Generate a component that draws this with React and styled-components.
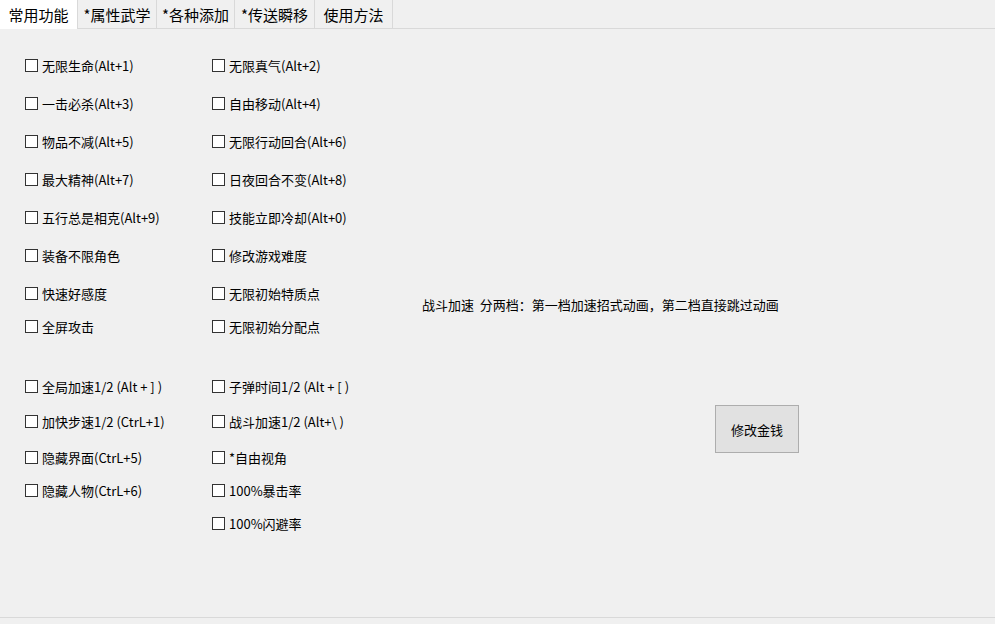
import React from 'react';
import styled, { createGlobalStyle } from 'styled-components';

const Global = createGlobalStyle`
  body { margin: 0; background: #f0f0f0; font-family: "Microsoft YaHei", "Noto Sans CJK SC", sans-serif; font-size: 13px; color: #000; }
  * { box-sizing: border-box; }
`;

const Window = styled.div`
  width: 995px;
  height: 624px;
  display: flex;
  flex-direction: column;
  background: #f0f0f0;
`;

const TabBar = styled.div`
  display: flex;
  height: 29px;
  border-bottom: 1px solid #d9d9d9;
  background: #f0f0f0;
`;

const Tab = styled.div`
  width: ${p => p.w}px;
  display: flex;
  align-items: center;
  justify-content: center;
  font-size: 15px;
  background: ${p => (p.active ? '#fff' : '#f0f0f0')};
  border-right: 1px solid #d9d9d9;
  height: ${p => (p.active ? 29 : 28)}px;
`;

const Body = styled.div`
  flex: 1;
  display: flex;
  border-bottom: 1px solid #d9d9d9;
  margin-bottom: 6px;
`;

const Column = styled.div`
  width: ${p => p.w}px;
  padding-left: ${p => p.pl}px;
  display: flex;
  flex-direction: column;
`;

const Check = styled.label`
  display: flex;
  align-items: center;
  gap: 4px;
  height: 16px;
  margin-top: ${p => p.mt}px;
  white-space: nowrap;
`;

const Box = styled.span`
  width: 13px;
  height: 13px;
  border: 1px solid #333;
  background: #fff;
`;

const Right = styled.div`
  flex: 1;
  display: flex;
  flex-direction: column;
  padding-top: 266px;
`;

const Note = styled.div`
  height: 16px;
`;

const Button = styled.button`
  margin-top: 94px;
  margin-left: 293px;
  width: 84px;
  height: 48px;
  background: #e1e1e1;
  border: 1px solid #adadad;
  font-family: inherit;
  font-size: 13px;
  padding: 0;
`;

const col1 = [
  ['无限生命(Alt+1)', 28], ['一击必杀(Alt+3)', 22], ['物品不减(Alt+5)', 22], ['最大精神(Alt+7)', 22],
  ['五行总是相克(Alt+9)', 22], ['装备不限角色', 22], ['快速好感度', 22], ['全屏攻击', 17],
  ['全局加速1/2 (Alt + ] )', 44], ['加快步速1/2 (CtrL+1)', 19], ['隐藏界面(CtrL+5)', 20], ['隐藏人物(CtrL+6)', 17],
];
const col2 = [
  ['无限真气(Alt+2)', 28], ['自由移动(Alt+4)', 22], ['无限行动回合(Alt+6)', 22], ['日夜回合不变(Alt+8)', 22],
  ['技能立即冷却(Alt+0)', 22], ['修改游戏难度', 22], ['无限初始特质点', 22], ['无限初始分配点', 17],
  ['子弹时间1/2 (Alt + [ )', 44], ['战斗加速1/2 (Alt+\\ )', 19], ['*自由视角', 20], ['100%暴击率', 17], ['100%闪避率', 17],
];

const tabs = [['常用功能', 78, true], ['*属性武学', 79], ['*各种添加', 78], ['*传送瞬移', 80], ['使用方法', 78]];

export default function App() {
  return (
    <Window>
      <Global />
      <TabBar>
        {tabs.map(([t, w, a]) => <Tab key={t} w={w} active={a}>{t}</Tab>)}
      </TabBar>
      <Body>
        <Column w={212} pl={25}>
          {col1.map(([t, m]) => <Check key={t} mt={m}><Box />{t}</Check>)}
        </Column>
        <Column w={210} pl={0}>
          {col2.map(([t, m]) => <Check key={t} mt={m}><Box />{t}</Check>)}
        </Column>
        <Right>
          <Note>战斗加速&nbsp;&nbsp;分两档：第一档加速招式动画，第二档直接跳过动画</Note>
          <Button>修改金钱</Button>
        </Right>
      </Body>
    </Window>
  );
}
